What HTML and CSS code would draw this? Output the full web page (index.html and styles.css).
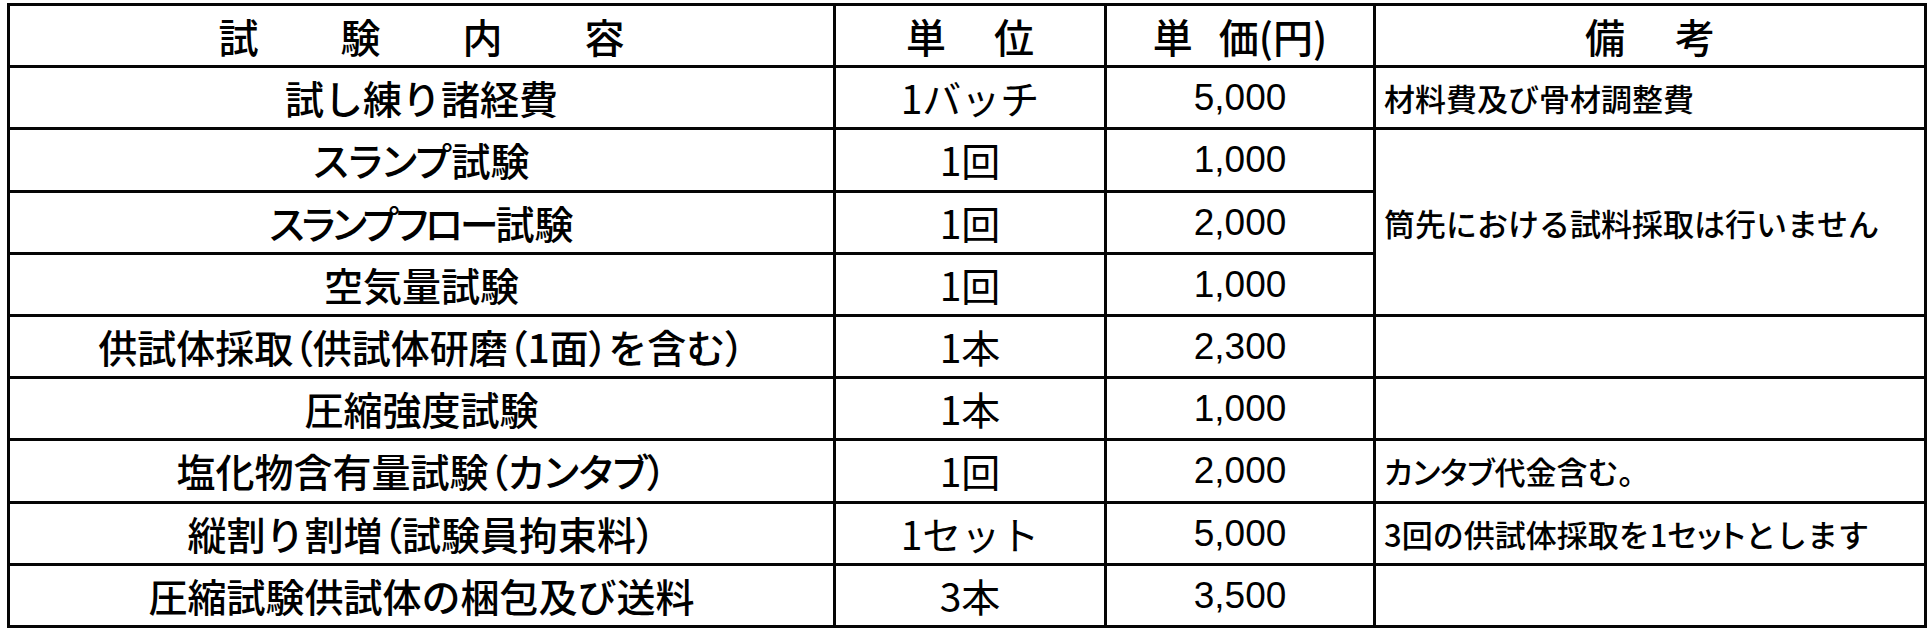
FILE: index.html
```html
<!DOCTYPE html>
<html lang="ja">
<head>
<meta charset="utf-8">
<title>試験料金表</title>
<link rel="stylesheet" href="styles.css">
</head>
<body>
<table class="price-table">
  <colgroup>
    <col class="c-item">
    <col class="c-unit">
    <col class="c-price">
    <col class="c-note">
  </colgroup>
  <thead>
    <tr>
      <th><span class="spread spread-item"><span>試</span><span>験</span><span>内</span><span>容</span></span></th>
      <th><span class="spread spread-unit"><span>単</span><span>位</span></span></th>
      <th><span class="spread spread-price"><span>単</span><span>価<span class="pr">(円)</span></span></span></th>
      <th><span class="spread spread-note"><span>備</span><span>考</span></span></th>
    </tr>
  </thead>
  <tbody>
    <tr>
      <td class="item">試し練り諸経費</td>
      <td class="unit">1バッチ</td>
      <td class="price">5,000</td>
      <td class="note">材料費及び骨材調整費</td>
    </tr>
    <tr>
      <td class="item"><span class="pr">スランプ</span>試験</td>
      <td class="unit">1回</td>
      <td class="price">1,000</td>
      <td class="note" rowspan="3">筒先における試料採取は行いません</td>
    </tr>
    <tr>
      <td class="item"><span class="pr tight">スランプフロー</span>試験</td>
      <td class="unit">1回</td>
      <td class="price">2,000</td>
    </tr>
    <tr>
      <td class="item">空気量試験</td>
      <td class="unit">1回</td>
      <td class="price">1,000</td>
    </tr>
    <tr>
      <td class="item">供試体採取<span class="pr">（</span>供試体研磨<span class="pr">（</span>1面<span class="pr">）</span>を含む<span class="pr">）</span></td>
      <td class="unit">1本</td>
      <td class="price">2,300</td>
      <td class="note"></td>
    </tr>
    <tr>
      <td class="item">圧縮強度試験</td>
      <td class="unit">1本</td>
      <td class="price">1,000</td>
      <td class="note"></td>
    </tr>
    <tr>
      <td class="item">塩化物含有量試験<span class="pr">（カンタブ）</span></td>
      <td class="unit">1回</td>
      <td class="price">2,000</td>
      <td class="note"><span class="pr">カンタブ</span>代金含む。</td>
    </tr>
    <tr>
      <td class="item">縦割り割増<span class="pr">（</span>試験員拘束料<span class="pr">）</span></td>
      <td class="unit">1セット</td>
      <td class="price">5,000</td>
      <td class="note">3回の供試体採取を1<span class="pr">セット</span>とします</td>
    </tr>
    <tr>
      <td class="item">圧縮試験供試体の梱包及び送料</td>
      <td class="unit">3本</td>
      <td class="price">3,500</td>
      <td class="note"></td>
    </tr>
  </tbody>
</table>
</body>
</html>
```

FILE: styles.css
```css
html, body {
  margin: 0;
  padding: 0;
  background: #ffffff;
}

body {
  padding: 3px 0 0 7px;
  font-family: "Noto Sans CJK JP", "Noto Sans", sans-serif;
  color: #000000;
}

.price-table {
  border-collapse: collapse;
  table-layout: fixed;
  width: 1917px;
}

.c-item { width: 826px; }
.c-unit { width: 271px; }
.c-price { width: 269px; }
.c-note { width: 551px; }

.price-table th,
.price-table td {
  border: 3px solid #050505;
  height: 59.2px;
  padding: 0;
  vertical-align: middle;
  white-space: nowrap;
  line-height: 1;
  font-weight: 500;
}

.price-table th {
  font-size: 40px;
}

.spread {
  display: flex;
  justify-content: center;
  align-items: center;
}

.spread-item { gap: 82px; }
.spread-unit { gap: 48px; }
.spread-price { gap: 26px; }
.spread-note { gap: 50px; }

.pr {
  font-feature-settings: "palt" 1;
}

.tight {
  letter-spacing: -3px;
}

.item,
.unit {
  text-align: center;
  font-size: 39px;
}

.price-table td.unit {
  font-weight: 400;
}

.price {
  text-align: center;
  font-family: "Liberation Sans", "Noto Sans CJK JP", sans-serif;
  font-size: 37px;
}

.note {
  text-align: left;
  padding-left: 8px !important;
  font-size: 31px;
}
```
